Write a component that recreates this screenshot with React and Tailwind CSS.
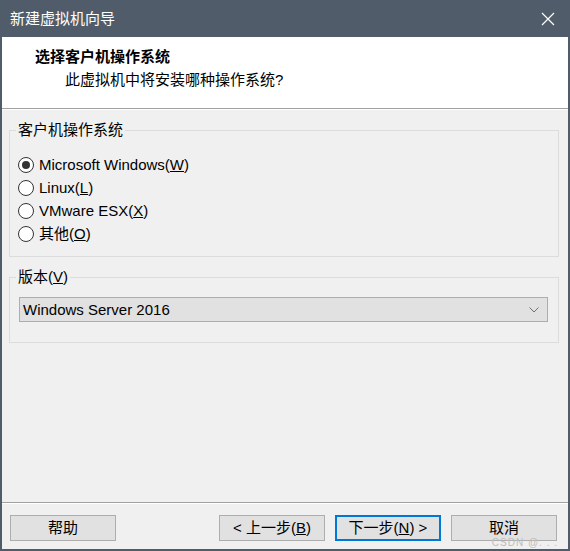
import React from 'react';

const font = { fontFamily: '"Liberation Sans", "Noto Sans CJK SC", sans-serif' };

function Radio({ checked, children }) {
  return (
    <div className="flex items-center h-[23px]">
      <span className="w-[16px] h-[16px] rounded-full border border-[#333333] bg-white flex items-center justify-center">
        {checked && <span className="w-[8px] h-[8px] rounded-full bg-[#333333]" />}
      </span>
      <span className="ml-[5px] text-[15px] text-black leading-[20px]">{children}</span>
    </div>
  );
}

function Btn({ children, focus }) {
  return (
    <button
      className={
        focus
          ? 'w-[106px] h-[26px] bg-[#e1e1e1] border-2 border-[#0078d7] text-[15px] text-black leading-[20px]'
          : 'w-[106px] h-[26px] bg-[#e1e1e1] border border-[#adadad] text-[15px] text-black leading-[20px]'
      }
    >
      {children}
    </button>
  );
}

export default function App() {
  return (
    <div className="w-[570px] h-[551px] flex flex-col bg-[#f0f0f0]" style={font}>
      <div className="h-[37px] bg-[#505c6a] flex items-center justify-between pl-[10px] pr-[15px] shrink-0">
        <span className="text-white text-[15px] leading-[20px]">新建虚拟机向导</span>
        <svg width="14" height="14" viewBox="0 0 14 14" className="block">
          <path d="M1 1 L13 13 M13 1 L1 13" stroke="#ffffff" strokeWidth="1.2" />
        </svg>
      </div>
      <div className="flex-1 flex flex-col border-x-2 border-b-2 border-[#505c6a]">
        <div className="h-[72px] bg-white pt-[10px] border-b border-[#a0a0a0] shrink-0">
          <div className="pl-[33px] text-[15px] font-bold text-black leading-[20px]">选择客户机操作系统</div>
          <div className="pl-[63px] mt-[3px] text-[15px] text-black leading-[20px]">此虚拟机中将安装哪种操作系统?</div>
        </div>
        <div className="h-px bg-white" />

        <fieldset className="mt-[10px] ml-[7px] mr-[9px] border border-[#dcdcdc] pl-[8px] pt-[13px] pb-[11px]">
          <legend className="-ml-[2px] px-[2px] text-[15px] leading-[20px] text-black">客户机操作系统</legend>
          <Radio checked>
            Microsoft Windows(<u>W</u>)
          </Radio>
          <Radio>
            Linux(<u>L</u>)
          </Radio>
          <Radio>
            VMware ESX(<u>X</u>)
          </Radio>
          <Radio>
            其他(<u>O</u>)
          </Radio>
        </fieldset>

        <fieldset className="mt-[10px] ml-[7px] mr-[9px] border border-[#dcdcdc] pl-[9px] pr-[10px] pt-[10px] pb-[20px]">
          <legend className="-ml-[3px] px-[2px] text-[15px] leading-[20px] text-black">
            版本(<u>V</u>)
          </legend>
          <div className="h-[25px] bg-[#e1e1e1] border border-[#adadad] flex items-center justify-between pl-[3px] pr-[8px]">
            <span className="text-[15px] leading-[20px] text-black">Windows Server 2016</span>
            <svg width="10" height="6" viewBox="0 0 10 6" className="block">
              <path d="M0.5 0.5 L5 5 L9.5 0.5" stroke="#707070" strokeWidth="1" fill="none" />
            </svg>
          </div>
        </fieldset>

        <div className="flex-1" />
        <div className="h-px bg-[#a0a0a0]" />
        <div className="h-px bg-white" />
        <div className="relative flex items-center pl-[8px] pr-[11px] pt-[11px] pb-[8px]">
          <Btn>帮助</Btn>
          <div className="flex-1" />
          <div className="flex gap-[10px]">
            <Btn>
              &lt; 上一步(<u>B</u>)
            </Btn>
            <Btn focus>
              下一步(<u>N</u>) &gt;
            </Btn>
            <Btn>取消</Btn>
          </div>
          <span className="absolute right-[10px] bottom-0 text-[10px] leading-[12px] text-[#bdbdbd] tracking-[1px]">CSDN @. . .</span>
        </div>
      </div>
    </div>
  );
}
